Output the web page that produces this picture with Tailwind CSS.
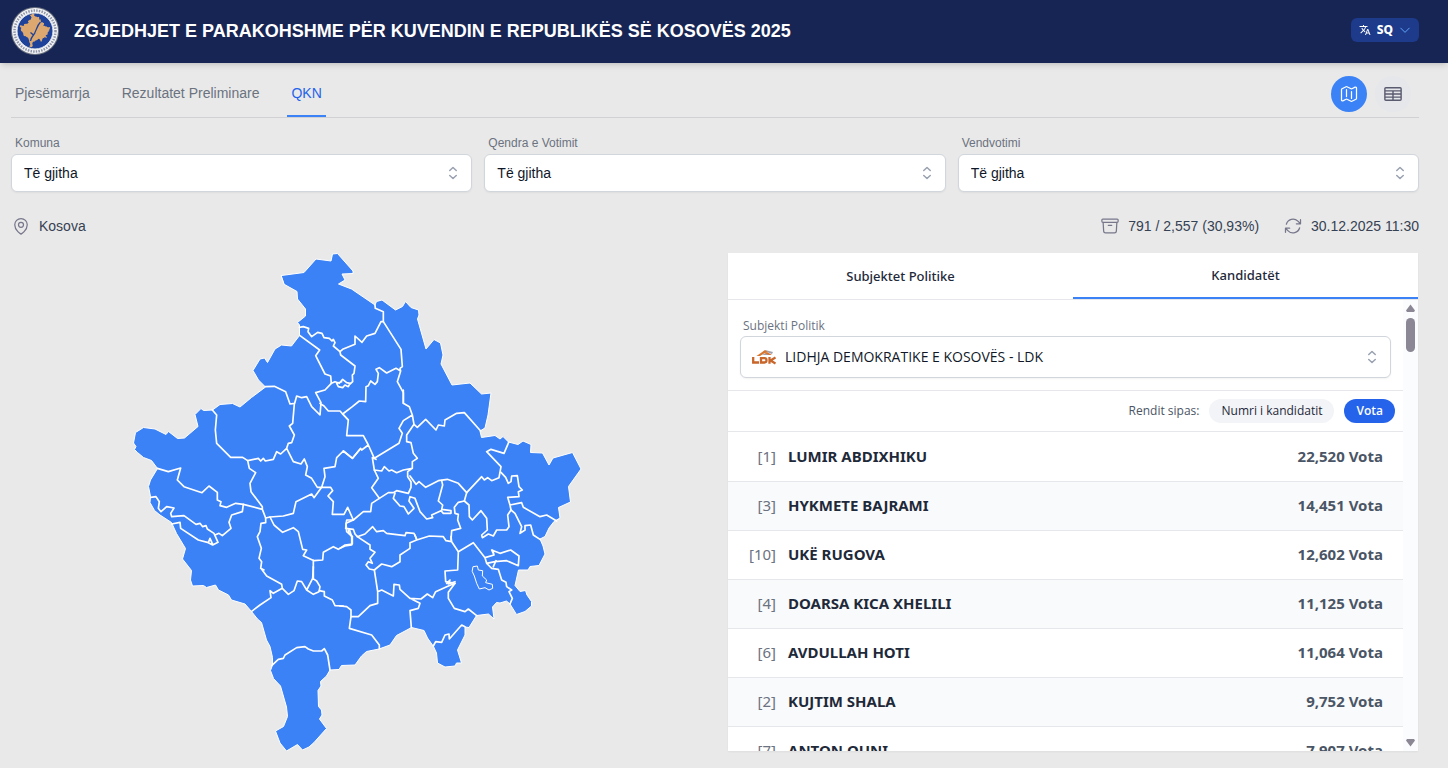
<!DOCTYPE html>
<html lang="sq">
<head>
    <meta charset="UTF-8">
    <meta name="viewport" content="width=device-width, initial-scale=1.0">
    <title>Zgjedhjet e parakohshme për Kuvendin e Republikës së Kosovës 2025</title>
    <script src="https://cdn.jsdelivr.net/npm/@tailwindcss/browser@4"></script>
</head>
<body class="h-screen flex flex-col overflow-hidden bg-[#e9e9e9] font-['Liberation_Sans',Arial,sans-serif]">
    <header class="h-[63px] shrink-0 flex items-center justify-between pl-[11px] pr-[29px] pb-0.5 bg-[#172554] shadow-md">
        <div class="flex items-center gap-[15px]">
            <svg class="size-12" viewBox="0 0 48 48" aria-hidden="true">
                <circle cx="24" cy="24" r="24" fill="#6b7280"/>
                <circle cx="24" cy="24" r="23" fill="#f3f4f6"/>
                <circle cx="24" cy="24" r="20.5" fill="none" stroke="#8f95a8" stroke-width="2.5" stroke-dasharray="1.5 1.2"/>
                <circle cx="24" cy="24" r="18" fill="#1e429a" stroke="#e5e7eb"/>
                <use href="#kosova" fill="#dca870" transform="translate(-.3 -10.8) scale(.068)"/>
                <path d="M29.500 15c-4 4-4 9-7 13l-3-2.500M24 26c-2 3-4 4-4.500 8" fill="none" stroke="#1e429a" stroke-width="1.300"/>
            </svg>
            <h1 class="text-lg font-bold text-white">ZGJEDHJET E PARAKOHSHME PËR KUVENDIN E REPUBLIKËS SË KOSOVËS 2025</h1>
        </div>
        <button type="button" class="h-6 mb-0.5 px-2 flex items-center gap-1.5 rounded-md bg-[#1e3a8a] text-white text-xs font-extrabold font-['Noto_Sans',sans-serif]">
            <svg class="size-3" viewBox="0 0 24 24" fill="currentColor" aria-hidden="true"><path d="M12.87 15.07l-2.54-2.51.03-.03A17.52 17.52 0 0014.07 6H17V4h-7V2H8v2H1v1.99h11.17C11.5 7.92 10.44 9.75 9 11.35 8.07 10.32 7.3 9.19 6.69 8h-2c.73 1.63 1.73 3.17 2.98 4.56l-5.09 5.02L4 19l5-5 3.11 3.11.76-2.04zM18.5 10h-2L12 22h2l1.12-3h4.75L21 22h2l-4.5-12zm-2.62 7l1.62-4.33L19.12 17h-3.24z"/></svg>
            SQ
            <svg class="size-3 text-[#60a5fa]" viewBox="0 0 24 24" fill="none" stroke="currentColor" stroke-width="2" stroke-linecap="round" stroke-linejoin="round" aria-hidden="true"><path d="m20.5 8.25-8.5 8.5-8.5-8.5"/></svg>
        </button>
    </header>

    <main class="flex-1 min-h-0 flex flex-col pl-[11px] pr-[29px] pb-[17px]">
        <div class="h-[55px] shrink-0 flex items-stretch justify-between border-b border-[#d1d1d3]">
            <nav class="flex gap-6 text-sm text-[#6b7280]">
                <a href="#" class="flex items-center px-1 pt-2 border-b-2 border-transparent">Pjesëmarrja</a>
                <a href="#" class="flex items-center px-1 pt-2 border-b-2 border-transparent">Rezultatet Preliminare</a>
                <a href="#" class="flex items-center px-1 pt-2 border-b-2 border-[#3b82f6] text-[#2563eb]">QKN</a>
            </nav>
            <div class="flex items-center gap-2 pt-2 pr-2">
                <button type="button" aria-label="Harta" class="size-9 grid place-items-center rounded-full bg-[#3b82f6] text-white">
                    <svg class="size-5" viewBox="0 0 24 24" fill="none" stroke="currentColor" stroke-width="1.5" stroke-linecap="round" stroke-linejoin="round"><path d="M9 6.75V15m6-6v8.25m.503 3.498 4.875-2.437c.381-.19.622-.58.622-1.006V4.82c0-.836-.88-1.38-1.628-1.006l-3.869 1.934c-.317.159-.69.159-1.006 0L9.503 3.252a1.125 1.125 0 0 0-1.006 0L3.622 5.689C3.24 5.88 3 6.27 3 6.695V19.18c0 .836.88 1.38 1.628 1.006l3.869-1.934c.317-.159.69-.159 1.006 0l4.994 2.497c.317.158.69.158 1.006 0Z"/></svg>
                </button>
                <button type="button" aria-label="Tabela" class="size-9 grid place-items-center rounded-full bg-[#e5e7eb] text-[#5b5b70]">
                    <svg class="size-5" viewBox="0 0 24 24" fill="none" stroke="currentColor" stroke-width="1.7" stroke-linecap="round" stroke-linejoin="round"><path d="M3.375 19.5h17.25m-17.25 0a1.125 1.125 0 0 1-1.125-1.125M3.375 19.5h7.5c.621 0 1.125-.504 1.125-1.125m-9.75 0V5.625m0 12.75v-1.5c0-.621.504-1.125 1.125-1.125m18.375 2.625V5.625m0 12.75c0 .621-.504 1.125-1.125 1.125m1.125-1.125v-1.5c0-.621-.504-1.125-1.125-1.125m0 3.75h-7.5A1.125 1.125 0 0 1 12 18.375m9.75-12.75c0-.621-.504-1.125-1.125-1.125H3.375c-.621 0-1.125.504-1.125 1.125m19.5 0v1.5c0 .621-.504 1.125-1.125 1.125M2.25 5.625v1.5c0 .621.504 1.125 1.125 1.125m0 0h17.25m-17.25 0h7.5c.621 0 1.125.504 1.125 1.125M3.375 8.25c-.621 0-1.125.504-1.125 1.125v1.5c0 .621.504 1.125 1.125 1.125m17.25-3.75h-7.5c-.621 0-1.125.504-1.125 1.125m8.625-1.125c.621 0 1.125.504 1.125 1.125v1.5c0 .621-.504 1.125-1.125 1.125m-17.25 0h7.5m-7.5 0c-.621 0-1.125.504-1.125 1.125v1.5c0 .621.504 1.125 1.125 1.125M12 10.875v-1.5m0 1.5c0 .621-.504 1.125-1.125 1.125M12 10.875c0 .621.504 1.125 1.125 1.125m-2.25 0c.621 0 1.125.504 1.125 1.125M13.125 12h7.5m-7.5 0c-.621 0-1.125.504-1.125 1.125M20.625 12c.621 0 1.125.504 1.125 1.125v1.5c0 .621-.504 1.125-1.125 1.125m-17.25 0h7.5M12 14.625v-1.5m0 1.5c0 .621-.504 1.125-1.125 1.125M12 14.625c0 .621.504 1.125 1.125 1.125m-2.25 0c.621 0 1.125.504 1.125 1.125m0 1.5v-1.5m0 0c0-.621.504-1.125 1.125-1.125m0 0h7.5"/></svg>
                </button>
            </div>
        </div>

        <!-- filters -->
        <div class="grid grid-cols-3 gap-3 pt-[17px]">
            <div>
                <label for="komuna" class="block pl-1 pb-[3px] text-xs text-[#6b7280]">Komuna</label>
                <div class="relative">
                    <select id="komuna" class="block w-full h-[38px] appearance-none rounded-md border border-gray-300 bg-white pl-3 pr-10 text-sm text-gray-900 shadow-xs"><option>Të gjitha</option></select>
                    <svg class="pointer-events-none absolute right-[9px] top-[9px] size-5 text-gray-400" viewBox="0 0 20 20" fill="none" stroke="currentColor" stroke-width="1.5" stroke-linecap="round" stroke-linejoin="round"><path d="M6.750 7.500 10 4.500l3.250 3M6.750 12.500 10 15.500l3.250-3"/></svg>
                </div>
            </div>
            <div>
                <label for="qendra" class="block pl-1 pb-[3px] text-xs text-[#6b7280]">Qendra e Votimit</label>
                <div class="relative">
                    <select id="qendra" class="block w-full h-[38px] appearance-none rounded-md border border-gray-300 bg-white pl-3 pr-10 text-sm text-gray-900 shadow-xs"><option>Të gjitha</option></select>
                    <svg class="pointer-events-none absolute right-[9px] top-[9px] size-5 text-gray-400" viewBox="0 0 20 20" fill="none" stroke="currentColor" stroke-width="1.5" stroke-linecap="round" stroke-linejoin="round"><path d="M6.750 7.500 10 4.500l3.250 3M6.750 12.500 10 15.500l3.250-3"/></svg>
                </div>
            </div>
            <div>
                <label for="vendvotimi" class="block pl-1 pb-[3px] text-xs text-[#6b7280]">Vendvotimi</label>
                <div class="relative">
                    <select id="vendvotimi" class="block w-full h-[38px] appearance-none rounded-md border border-gray-300 bg-white pl-3 pr-10 text-sm text-gray-900 shadow-xs"><option>Të gjitha</option></select>
                    <svg class="pointer-events-none absolute right-[9px] top-[9px] size-5 text-gray-400" viewBox="0 0 20 20" fill="none" stroke="currentColor" stroke-width="1.5" stroke-linecap="round" stroke-linejoin="round"><path d="M6.750 7.500 10 4.500l3.250 3M6.750 12.500 10 15.500l3.250-3"/></svg>
                </div>
            </div>
        </div>

        <div class="flex items-center justify-between pt-6 pb-[17px] text-sm text-gray-700">
            <div class="flex items-center gap-2">
                <svg class="size-5 text-[#77778c]" viewBox="0 0 24 24" fill="none" stroke="currentColor" stroke-width="1.5" stroke-linecap="round" stroke-linejoin="round"><path d="M15 10.500a3 3 0 1 1-6 0 3 3 0 0 1 6 0Z"/><path d="M19.500 10.500c0 7.142-7.500 11.250-7.500 11.250S4.500 17.642 4.500 10.500a7.500 7.500 0 1 1 15 0Z"/></svg>
                Kosova
            </div>
            <div class="flex items-center gap-6">
                <div class="flex items-center gap-2">
                    <svg class="size-5 text-[#77778c]" viewBox="0 0 24 24" fill="none" stroke="currentColor" stroke-width="1.5" stroke-linecap="round" stroke-linejoin="round"><path d="m20.250 7.500-.625 10.632a2.250 2.250 0 0 1-2.247 2.118H6.622a2.250 2.250 0 0 1-2.247-2.118L3.750 7.500M10 11.250h4M3.375 7.500h17.250c.621 0 1.125-.504 1.125-1.125v-1.500c0-.621-.504-1.125-1.125-1.125H3.375c-.621 0-1.125.504-1.125 1.125v1.500c0 .621.504 1.125 1.125 1.125Z"/></svg>
                    791 / 2,557 (30,93%)
                </div>
                <div class="flex items-center gap-2">
                    <svg class="size-5 text-[#77778c]" viewBox="0 0 24 24" fill="none" stroke="currentColor" stroke-width="1.5" stroke-linecap="round" stroke-linejoin="round"><path d="M16.023 9.348h4.992v-.001M2.985 19.644v-4.992m0 0h4.992m-4.993 0 3.181 3.183a8.250 8.250 0 0 0 13.803-3.700M4.031 9.865a8.250 8.250 0 0 1 13.803-3.700l3.181 3.182m0-4.991v4.990"/></svg>
                    30.12.2025 11:30
                </div>
            </div>
        </div>

        <div class="flex-1 min-h-0 grid grid-cols-2 gap-6">
            <div class="min-h-0">
                <svg class="block w-full h-full" viewBox="387 759 1368 1494" role="img" aria-label="Harta e Kosovës" stroke-linejoin="round" stroke-linecap="round">
                    <defs>
                        <path id="kosova" d="M281.500 275.500 304 272.500 316 259 331 261 332.500 254 337.500 253.500 353 271 353 273.500 342 274 345 280 338.500 284 351.500 289 375 305 376.500 301.500 382 300 395.500 310 402.500 306.500 405.500 301.500 411 307.500 418.500 310 419 315 417.500 319 426 349 434 339.500 440.500 343 443 355 441 364 452 385 470 383 481.500 394 491 393 488 415 485 428 480 431 481.500 437.500 495 435.500 500 439 503 436.500 508.500 442 518 444.500 523 441 531 444.500 530.500 452.500 542.500 453 549 465 553 458 572.500 452.500 581 469 568.500 486.500 570.500 502 558.500 507.500 560 518 554 521.500 549 528 545 536.500 540 539 543 546 545 554 539 565.500 530 566.500 528 570 518.500 570 515 585.500 520 591.500 525.500 590.500 527 595 531.500 601.500 531.500 606 525 611.500 516.500 614.500 510 604 506.500 601 500 603 496.500 602.500 492.500 607 494 619 488.500 614 476.500 615.500 469 627.500 465 627 465 635 457.500 650 461.500 663 456.500 663 455 666 445 667 437.500 663 436.500 653 433.500 646.500 427.500 638 424 630.500 411.500 627.500 405 631 396.500 635.500 390 645 379 649 366.500 651.500 361.500 656 355 665 341.500 665.500 339 669.500 330 670 326.500 676 320.500 681.500 321 686 318 690.500 318.500 706.500 321.500 710 322 715 319.500 719 326.500 728.500 314 742.500 309 747 302.500 750 297.500 744.500 286.500 751 280 743 275.500 731 283.500 726.500 287.500 716.500 286.500 707 280.500 686 273.500 678.500 270.500 670.500 272.500 665 272.500 657.500 270 646.500 266.500 640 261.500 622.500 257.500 619 251.500 611.500 245 604 231.500 600 228.500 595 218.500 590 215.500 585 206.500 587.500 203.500 585.500 192.500 586 190.500 580 191.500 570.500 182.500 559 185.500 548.500 176.500 533.500 171.500 522.500 160 515 154.500 510.500 150 502.500 150.500 496.500 148.500 486.500 150.500 480 157.500 468.500 151.500 460.500 143.500 457.500 137.500 452.500 134.500 449.500 136 446.500 133.500 443 135.500 432.500 143.500 427.500 155 429 166 434.500 168.500 431.500 177.500 438.500 184.500 438 198 426.500 195 414.500 201 408.500 203.500 410.500 212.500 410 220 404.500 232.500 403.500 240 407 251.500 397.500 265.500 387 258.500 380 253 370.500 260 359 264.500 358 267.500 362.500 275 349 281.500 345 291.500 346 299.500 335.500 299.500 325 297.500 322.500 305.500 316 305.500 309 297.500 299 297 291.500 284.500 284.500Z"/>
                    </defs>
                    <use href="#kosova" transform="scale(3)" fill="#3b82f6" stroke="#fff" stroke-width="1"/>
                    <!-- municipality borders, grouped by area -->
                    <g fill="none" stroke="#fff" stroke-width="5">
                        <g transform="translate(360 720)">
                            <path d="M538 262 550 260 566 265 564 275 575 290 593 277 606 280 612 293 628 295 636 303 640 298 645 308 640 318 660 335 662 345 705 378 702 400 697 405 698 425 690 432M540 287 599 330 587 347 615 402 632 408 634 430 645 425 658 430 668 418 680 428 690 430 685 440 675 435 668 443 655 440 650 430 665 425"/>
                            <path d="M634 430 615 450 587 458 603 488 600 525 575 500 560 470 545 473 530 468 524 490 510 492 497 455 463 439 436 440M600 490 612 498 625 513 640 513 660 513 668 522 685 540M660 335 668 328 705 313 705 288 726 307 740 288 765 280 783 245 790 245 790 215 766 205 765 195"/>
                            <path d="M790 245 843 328 847 380 840 385 842 393 832 425 850 458 850 490M842 393 828 385 800 399 778 383 768 388 775 400 772 425 765 433 752 423 745 437 738 440 737 485 718 483 697 500 668 522"/>
                        </g>
                        <g transform="translate(360 1170)">
                            <path d="M277 60 290 75 286 120 290 160 332 202 368 202 383 212 415 205 422 213 430 205 436 213 460 208 470 185 482 192 500 175 505 160 515 158 523 135 508 108 518 100 523 42M500 175 520 215 543 222 553 207 562 230 557 255 575 265 592 292 605 292 582 323 575 312 528 335 520 370 490 378 450 381 437 384"/>
                            <path d="M383 212 388 235 407 248 390 280 393 305 427 350 427 358 437 384 437 398 423 400 420 425 412 440 424 475 417 505 425 515 422 535 432 540M112 235 145 245 182 234 172 270 192 290 246 308 267 288 292 307 292 330 303 335 300 347 320 352 347 340 370 343 427 358"/>
                            <path d="M92 322 108 320 118 335 115 355 123 365 140 350 162 354 152 370 155 380 192 377 228 403 240 400 248 410 258 407 262 417 282 430 294 457 278 465 265 458 235 450 182 415 180 397 155 402M370 343 367 365 335 375 327 397 333 415 307 437 297 430 285 435M265 458 270 445 278 463"/>
                            <path d="M450 381 462 405 488 427 520 413 535 425 548 478 560 480 550 497 582 512 608 510 610 487 640 470 655 478 675 465 697 462 697 440 680 425 678 400 700 390M580 510 580 565M605 292 615 260 612 235 645 230 650 203 670 183 697 205 720 178M605 292 632 292 638 302 624 318 640 335 637 373 672 373 683 352 700 390"/>
                        </g>
                        <g transform="translate(1020 1170)">
                            <path d="M8 72 25 90 20 137 70 137 85 165 103 205 177 160 187 130 177 115 190 92 217 75M190 0 190 40 208 50 217 75 222 103 232 112 257 88 288 120 295 105 313 108 315 90 350 70 373 68 422 123M85 165 65 180 62 175 38 205 10 183M108 208 97 203 103 240 115 265 95 293 118 325 95 340 92 365 70 365 40 390"/>
                            <path d="M222 103 200 135 200 155 213 158 220 190 232 205 217 215 217 235 190 240 170 248 155 240 147 243 133 230 125 243 103 240M217 235 203 245 203 260 213 275 213 292 205 310 170 302 160 308 145 308 118 325M210 258 228 283 237 275 257 292 295 272 322 268 355 280 380 308 373 333"/>
                            <path d="M305 272 308 285 295 333 308 345 305 358 333 362 333 370 310 370 303 362 275 375 278 383 260 387 240 365 225 325 210 320 207 333 222 355 205 372 192 350 180 348 160 325 165 310M380 308 425 260 433 270 443 263 455 272 477 263 483 230 440 185 453 178 492 190 506 157"/>
                            <path d="M483 247 497 262 505 280 513 275 515 258 532 257 537 290 547 300 535 305 537 320 503 322 510 345 545 338 550 352 600 380 620 375 650 393M510 345 513 360 503 375 507 410 500 420 470 420 460 438 445 432 427 443 425 435 442 420 440 385 423 362 397 390 388 380 387 345 373 333 355 337 343 352 345 370 355 373 353 390 362 415 335 422 333 450"/>
                            <path d="M513 360 525 370 545 410 540 430 555 420 555 407 572 405 580 435 600 448M40 390 20 390 17 415 40 418 45 432 52 440 75 432 98 410 110 425 130 422 140 430 195 437 198 428 222 430 230 447M25 418 27 430 37 440"/>
                        </g>
                        <g transform="translate(1020 1560)">
                            <path d="M28 28 35 50 35 75 15 78 0 85M52 50 90 75 90 88 105 97 90 115 97 130 85 125 78 135 88 147 103 150 125 132 155 140 180 125 180 105 210 85 210 68 230 60 225 45M230 60 268 48 310 50 318 62 335 65 355 95 353 150 315 153 317 185 345 190M335 65 333 50"/>
                            <path d="M355 95 400 68 435 113 462 105 455 90 480 100 512 90 537 108 535 137 500 122 465 125 440 130 445 135 455 145 475 148 485 180 498 187 500 200 515 210 507 215 517 235 510 252M435 113 440 130M462 105 458 90M460 140 468 122M320 190 330 180 325 192 345 185"/>
                            <path d="M103 150 113 215 113 250 90 257 55 290 35 290M113 215 125 210 160 228 162 193 178 195 180 208 210 235 243 237 262 222 278 233 287 215 320 200 345 190 325 217 325 235 343 265 375 275 385 267 410 287M210 235 240 250 235 265 210 272 214 323M280 378 287 365 305 367 315 345 327 342 328 357 365 315 375 320"/>
                            <path d="M0 258 20 260 33 270 33 290 28 325 95 345 118 375 118 386"/>
                            <path stroke-width="3" d="M400 140 412 138 415 150 428 152 427 168 440 180 437 188 457 193 458 205 447 210 435 203 418 207 410 190 403 168 397 155Z"/>
                        </g>
                        <g transform="translate(510 1650)">
                            <path d="M275 58 290 78 335 103 337 115 310 130 300 122 303 143 270 165 245 184M337 115 355 133 372 122 382 93 395 95 410 120 430 133 447 125 450 110 440 93 428 85 430 50M410 120 428 85M447 122 463 125 463 138 487 150 495 167 520 168"/>
                            <path d="M305 347 325 328 340 325 345 315 380 293 405 290 415 297 430 303 455 303 463 296 473 315 480 360"/>
                        </g>
                    </g>
                </svg>
            </div>

            <section class="min-h-0 flex flex-col mx-px bg-white shadow-xs font-['Noto_Sans','Open_Sans',sans-serif]">
                <div class="h-[47px] shrink-0 grid grid-cols-2 border-b border-gray-200 text-[13px] font-medium text-gray-800">
                    <button type="button" class="pt-px">Subjektet Politike</button>
                    <button type="button" class="pt-px border-b-2 border-[#3b82f6]">Kandidatët</button>
                </div>
                <div class="flex-1 min-h-0 flex">
                    <div class="flex-1 min-w-0 overflow-hidden">
                        <div class="px-3 pt-[18px] pb-3 border-b border-gray-200">
                            <label for="subjekti" class="block pl-[3px] pb-0.5 text-xs text-[#6b7280] font-['Open_Sans',sans-serif]">Subjekti Politik</label>
                            <div class="relative">
                                <select id="subjekti" class="block w-full h-[42px] appearance-none rounded-md border border-gray-300 bg-white pl-11 pr-10 text-sm font-medium text-gray-900 shadow-xs font-['Open_Sans',sans-serif]"><option>LIDHJA DEMOKRATIKE E KOSOVËS - LDK</option></select>
                                <svg class="pointer-events-none absolute left-3 top-[13px] w-6 h-4" viewBox="0 0 24 16" aria-hidden="true">
                                    <path d="M4.500 7 13 1l3 2-4 1.500L8 7z" fill="#d8752f"/>
                                    <path d="m13 1 8 2-1 2-3-1zM10 6l4-2 5 2z" fill="#77778c" opacity=".7"/>
                                    <path d="m15 3 5 3h-3l-4-1.500z" fill="#d8752f"/>
                                    <path d="M1.200 8v5.500H7M9 9.200h3.500q2 0 2 2.100t-2 2.200H9zM17.500 8v6.700M23.500 8.500l-5 3 5 3" fill="none" stroke="#c9662b" stroke-width="2.300"/>
                                </svg>
                                <svg class="pointer-events-none absolute right-[9px] top-[11px] size-5 text-gray-400" viewBox="0 0 20 20" fill="none" stroke="currentColor" stroke-width="1.5" stroke-linecap="round" stroke-linejoin="round"><path d="M6.750 7.500 10 4.500l3.250 3M6.750 12.500 10 15.500l3.250-3"/></svg>
                            </div>
                        </div>
                        <div class="h-[41px] flex items-center justify-end gap-2.5 pr-2 border-b border-gray-200 text-xs font-medium font-['Open_Sans',sans-serif]">
                            <span class="text-gray-600">Rendit sipas:</span>
                            <button type="button" class="h-6 px-3 rounded-full bg-[#f3f4f8] text-gray-800">Numri i kandidatit</button>
                            <button type="button" class="h-6 px-3 rounded-full bg-[#2563eb] text-white font-semibold">Vota</button>
                        </div>
                        <table class="w-full text-[15px]">
                            <tbody>
                                <tr class="h-[49px] border-b border-gray-200"><td class="w-12 text-right text-[15px] text-[#6b7280]">[1]</td><td class="pl-3 font-bold text-gray-800">LUMIR ABDIXHIKU</td><td class="pr-5 text-right font-bold text-gray-600">22,520 Vota</td></tr>
                                <tr class="h-[49px] border-b border-gray-200 bg-gray-50"><td class="w-12 text-right text-[15px] text-[#6b7280]">[3]</td><td class="pl-3 font-bold text-gray-800">HYKMETE BAJRAMI</td><td class="pr-5 text-right font-bold text-gray-600">14,451 Vota</td></tr>
                                <tr class="h-[49px] border-b border-gray-200"><td class="w-12 text-right text-[15px] text-[#6b7280]">[10]</td><td class="pl-3 font-bold text-gray-800">UKË RUGOVA</td><td class="pr-5 text-right font-bold text-gray-600">12,602 Vota</td></tr>
                                <tr class="h-[49px] border-b border-gray-200 bg-gray-50"><td class="w-12 text-right text-[15px] text-[#6b7280]">[4]</td><td class="pl-3 font-bold text-gray-800">DOARSA KICA XHELILI</td><td class="pr-5 text-right font-bold text-gray-600">11,125 Vota</td></tr>
                                <tr class="h-[49px] border-b border-gray-200"><td class="w-12 text-right text-[15px] text-[#6b7280]">[6]</td><td class="pl-3 font-bold text-gray-800">AVDULLAH HOTI</td><td class="pr-5 text-right font-bold text-gray-600">11,064 Vota</td></tr>
                                <tr class="h-[49px] border-b border-gray-200 bg-gray-50"><td class="w-12 text-right text-[15px] text-[#6b7280]">[2]</td><td class="pl-3 font-bold text-gray-800">KUJTIM SHALA</td><td class="pr-5 text-right font-bold text-gray-600">9,752 Vota</td></tr>
                                <tr class="h-[49px] border-b border-gray-200"><td class="w-12 text-right text-[15px] text-[#6b7280]">[7]</td><td class="pl-3 font-bold text-gray-800">ANTON QUNI</td><td class="pr-5 text-right font-bold text-gray-600">7,907 Vota</td></tr>
                            </tbody>
                        </table>
                    </div>
                    <!-- scroll track -->
                    <div class="w-[15px] shrink-0 flex flex-col items-center pt-1 pb-1 bg-[#fbfcfd]" aria-hidden="true">
                        <svg class="w-[9px] h-2" viewBox="0 0 9 8" fill="#8b8794"><path d="M4.500.5 9 6.500 8 8H1L0 6.500z"/></svg>
                        <div class="mt-1.5 w-[9px] h-[34px] rounded-full bg-[#8b8794]"></div>
                        <svg class="mt-auto w-[9px] h-2" viewBox="0 0 9 8" fill="#8b8794"><path d="M4.500 7.500 0 1.500 1 0h7l1 1.500z"/></svg>
                    </div>
                </div>
            </section>
        </div>
    </main>
</body>
</html>
